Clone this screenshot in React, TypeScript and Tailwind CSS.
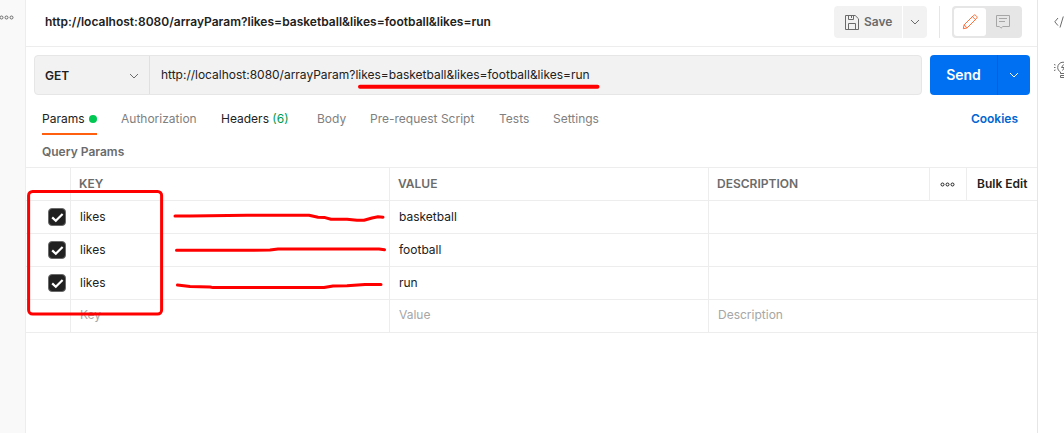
import React from 'react';

const ROWS = [
  { key: 'likes', value: 'basketball' },
  { key: 'likes', value: 'football' },
  { key: 'likes', value: 'run' },
];

const URL = 'http://localhost:8080/arrayParam?likes=basketball&likes=football&likes=run';

const Chevron = ({ className }: { className?: string }) => (
  <svg className={className} width="10" height="6" viewBox="0 0 10 6" fill="none" stroke="currentColor">
    <path d="M1 1l4 4 4-4" />
  </svg>
);

const Dots = ({ className }: { className?: string }) => (
  <svg className={className} width="15" height="5" viewBox="0 0 15 5" fill="none" stroke="currentColor">
    <circle cx="2.5" cy="2.5" r="1.5" />
    <circle cx="7.5" cy="2.5" r="1.5" />
    <circle cx="12.5" cy="2.5" r="1.5" />
  </svg>
);

const SaveIcon = () => (
  <svg width="14" height="15" viewBox="0 0 14 15" fill="none" stroke="#6b6b6b">
    <path d="M.5.5h9.7l3.3 3.3v10.7H.5z" />
    <path d="M3.5.5v4h5v-4M6.5 1v2M3.5 14.5v-6h7v6" />
  </svg>
);

const PencilIcon = () => (
  <svg width="16" height="16" viewBox="0 0 16 16" fill="none" stroke="#ff6c37">
    <path d="M1.3 14.7l.8-3.8L11.6 1.4a1.5 1.5 0 0 1 2.1 0l.9.9a1.5 1.5 0 0 1 0 2.1L5.1 13.9zM10.4 2.6l3 3M2.1 10.9l3 3" />
  </svg>
);

const CommentIcon = () => (
  <svg width="14" height="14" viewBox="0 0 14 14" fill="none" stroke="#a6a6a6">
    <path d="M.5.5h13v11H6.8L5 13.2 3.4 11.5H.5zM3 3.5h8M3 6.5h6" />
  </svg>
);

const Checkbox = () => (
  <span className="flex h-[18px] w-[18px] items-center justify-center rounded-[4px] border border-[#6b6b6b] bg-[#212121]">
    <svg width="13" height="11" viewBox="0 0 13 11" fill="none" stroke="#fff" strokeWidth="2.2">
      <path d="M1.2 5.4l3.6 3.4 6.8-6.8" />
    </svg>
  </span>
);

const RequestHeader = () => (
  <header className="flex h-[47px] items-start border-b border-[#ededed] pt-[6px] pr-[15px] pl-[19px]">
    <h1 className="flex h-8 items-center text-[12px] font-semibold tracking-[0.012px] whitespace-nowrap text-[#212121]">
      {URL}
    </h1>
    <div className="ml-auto flex h-8">
      <button className="flex w-[68px] items-center rounded-l bg-[#f2f2f2] pl-[11px] text-[12px] font-semibold text-[#6b6b6b]">
        <SaveIcon />
        <span className="ml-[5px]">Save</span>
      </button>
      <button className="ml-px flex w-6 items-center justify-center rounded-r bg-[#f2f2f2] text-[#6b6b6b]">
        <Chevron />
      </button>
      <div className="ml-3 w-px bg-[#e6e6e6]" />
      <div className="ml-3 flex w-[70px] rounded bg-[#e6e6e6] p-[2px]">
        <span className="flex w-8 items-center justify-center rounded-[3px] bg-white">
          <PencilIcon />
        </span>
        <span className="flex flex-1 items-center justify-center">
          <CommentIcon />
        </span>
      </div>
    </div>
  </header>
);

const UrlBar = () => (
  <div className="mt-2 flex h-10 pr-[7px] pl-2">
    <div className="flex flex-1 rounded border border-[#e6e6e6] bg-[#f2f2f2]">
      <div className="flex w-[115px] items-center justify-between border-r border-[#e0e0e0] pt-px pr-[10px] pl-[10px] text-[12px] font-semibold text-[#212121]">
        GET
        <Chevron className="text-[#6b6b6b]" />
      </div>
      <div className="flex items-center pl-[11px] text-[12px] tracking-[-0.01px] text-[#212121]">{URL}</div>
    </div>
    <div className="ml-2 flex w-[100px] overflow-hidden rounded bg-[#0070f3] text-white">
      <button className="w-[67px] pb-[2px] text-[14px] font-semibold">Send</button>
      <button className="flex flex-1 items-center justify-center border-l border-[#0061d6]">
        <Chevron />
      </button>
    </div>
  </div>
);

const Tabs = () => (
  <nav className="flex h-10 items-start pr-[19px] pl-4 text-[12px] whitespace-nowrap text-[#808080]">
    <div className="flex h-10 w-[55px] items-center justify-between border-b-2 border-[#ff5f0f] pt-[10px] text-[#212121]">
      Params
      <span className="h-2 w-2 rounded-full bg-[#00c853]" />
    </div>
    <div className="flex h-[38px] flex-1 items-center pt-[10px]">
      <span className="ml-6 w-[100px]">Authorization</span>
      <span className="w-24 text-[#212121]">
        Headers <span className="text-[#009b4d]">(6)</span>
      </span>
      <span className="w-[53px]">Body</span>
      <span className="w-[129px]">Pre-request Script</span>
      <span className="w-[54px]">Tests</span>
      <span>Settings</span>
      <span className="ml-auto font-semibold text-[#0265d2]">Cookies</span>
    </div>
  </nav>
);

const ParamsTable = () => (
  <div className="border-t border-[#ededed] text-[12px] text-[#212121]">
    <div className="flex h-[33px] items-stretch border-b border-[#ededed] font-semibold text-[#6b6b6b]">
      <div className="w-[45px] border-r border-[#ededed]" />
      <div className="flex w-[319px] items-center border-r border-[#ededed] pl-2">KEY</div>
      <div className="flex w-[319px] items-center border-r border-[#ededed] pl-2">VALUE</div>
      <div className="flex flex-1 items-center pl-2">DESCRIPTION</div>
      <div className="flex w-[37px] items-center border-l border-[#ededed] pl-[10px] text-[#212121]">
        <Dots />
      </div>
      <div className="flex w-[71px] items-center border-l border-[#ededed] pl-[10px] whitespace-nowrap text-[#212121]">
        Bulk Edit
      </div>
    </div>
    {ROWS.map((row) => (
      <div key={row.value} className="flex h-[33px] border-b border-[#ededed]">
        <div className="flex w-[45px] items-center justify-end border-r border-[#ededed] pr-1">
          <Checkbox />
        </div>
        <div className="flex w-[319px] items-center border-r border-[#ededed] pl-[9px]">{row.key}</div>
        <div className="flex w-[319px] items-center border-r border-[#ededed] pl-[9px]">{row.value}</div>
      </div>
    ))}
    <div className="flex h-[33px] border-b border-[#ededed] text-[#a6a6a6]">
      <div className="w-[45px] border-r border-[#ededed]" />
      <div className="flex w-[319px] items-center border-r border-[#ededed] pb-[2px] pl-[9px]">Key</div>
      <div className="flex w-[319px] items-center border-r border-[#ededed] pb-[2px] pl-[9px]">Value</div>
      <div className="flex items-center pb-[2px] pl-[9px]">Description</div>
    </div>
  </div>
);

// Hand-drawn red marks over the request
const Marks = () => (
  <svg
    className="pointer-events-none absolute top-0 left-0"
    width="1064"
    height="433"
    fill="none"
    stroke="#ff0000"
    strokeWidth="3"
    strokeLinecap="round"
    strokeLinejoin="round"
  >
    <path d="M360 86.8H597.5" strokeWidth="4" />
    <rect x="28.6" y="191.5" width="133" height="122.5" rx="4" />
    <path d="M175 216H190L247 215.3H309L318 217.2 325 217.6 331 219.2H347L357 220.2H364L372 218 378 216.8 383 217.2" />
    <path d="M176.5 250.3H245L270 250 278 249H379L384.5 249.8" />
    <path d="M177.5 285L190 286.5 210 287 213 287.6H324L333 286 347 285.7 365 284.4H381" />
  </svg>
);

const App: React.FC = () => {
  return (
    <div className="relative flex h-[433px] w-[1064px] overflow-hidden bg-white font-['Inter',sans-serif]">
      <aside className="w-[26px] shrink-0 border-r border-[#ededed] bg-[#f9f9f9] pt-[15px] text-[#6b6b6b]">
        <Dots className="-ml-px" />
      </aside>
      <main className="w-[1011px] shrink-0">
        <RequestHeader />
        <UrlBar />
        <Tabs />
        <h2 className="flex h-8 items-center pt-[2px] pl-4 text-[12px] font-semibold text-[#6b6b6b]">Query Params</h2>
        <ParamsTable />
      </main>
      <aside className="flex flex-1 flex-col overflow-hidden border-l border-[#e6e6e6] pt-4 pl-4 text-[#6b6b6b]">
        <svg className="shrink-0" width="16" height="12" viewBox="0 0 16 12" fill="none" stroke="currentColor">
          <path d="M4 2L.8 5.8 4 9.6M9.3.5L6 11.5M11.7 2l3.5 3.8-3.5 3.8" />
        </svg>
        <svg className="mt-[33px] shrink-0" width="18" height="18" viewBox="0 0 18 18" fill="none" stroke="currentColor">
          <path d="M6.5 12.5V11C4.7 10 3.7 8.5 3.7 6.5a5.3 5.3 0 0 1 10.6 0c0 2-1 3.500-2.800 4.500v1.500zM6.500 14.500v2h5v-2zM9.500 3.500l-2 3h3l-2 3M0 3.500l1.500.5M0 6.500h1.500M0 9.500l1.500-.5" />
        </svg>
      </aside>
      <Marks />
    </div>
  );
};

export default App;
